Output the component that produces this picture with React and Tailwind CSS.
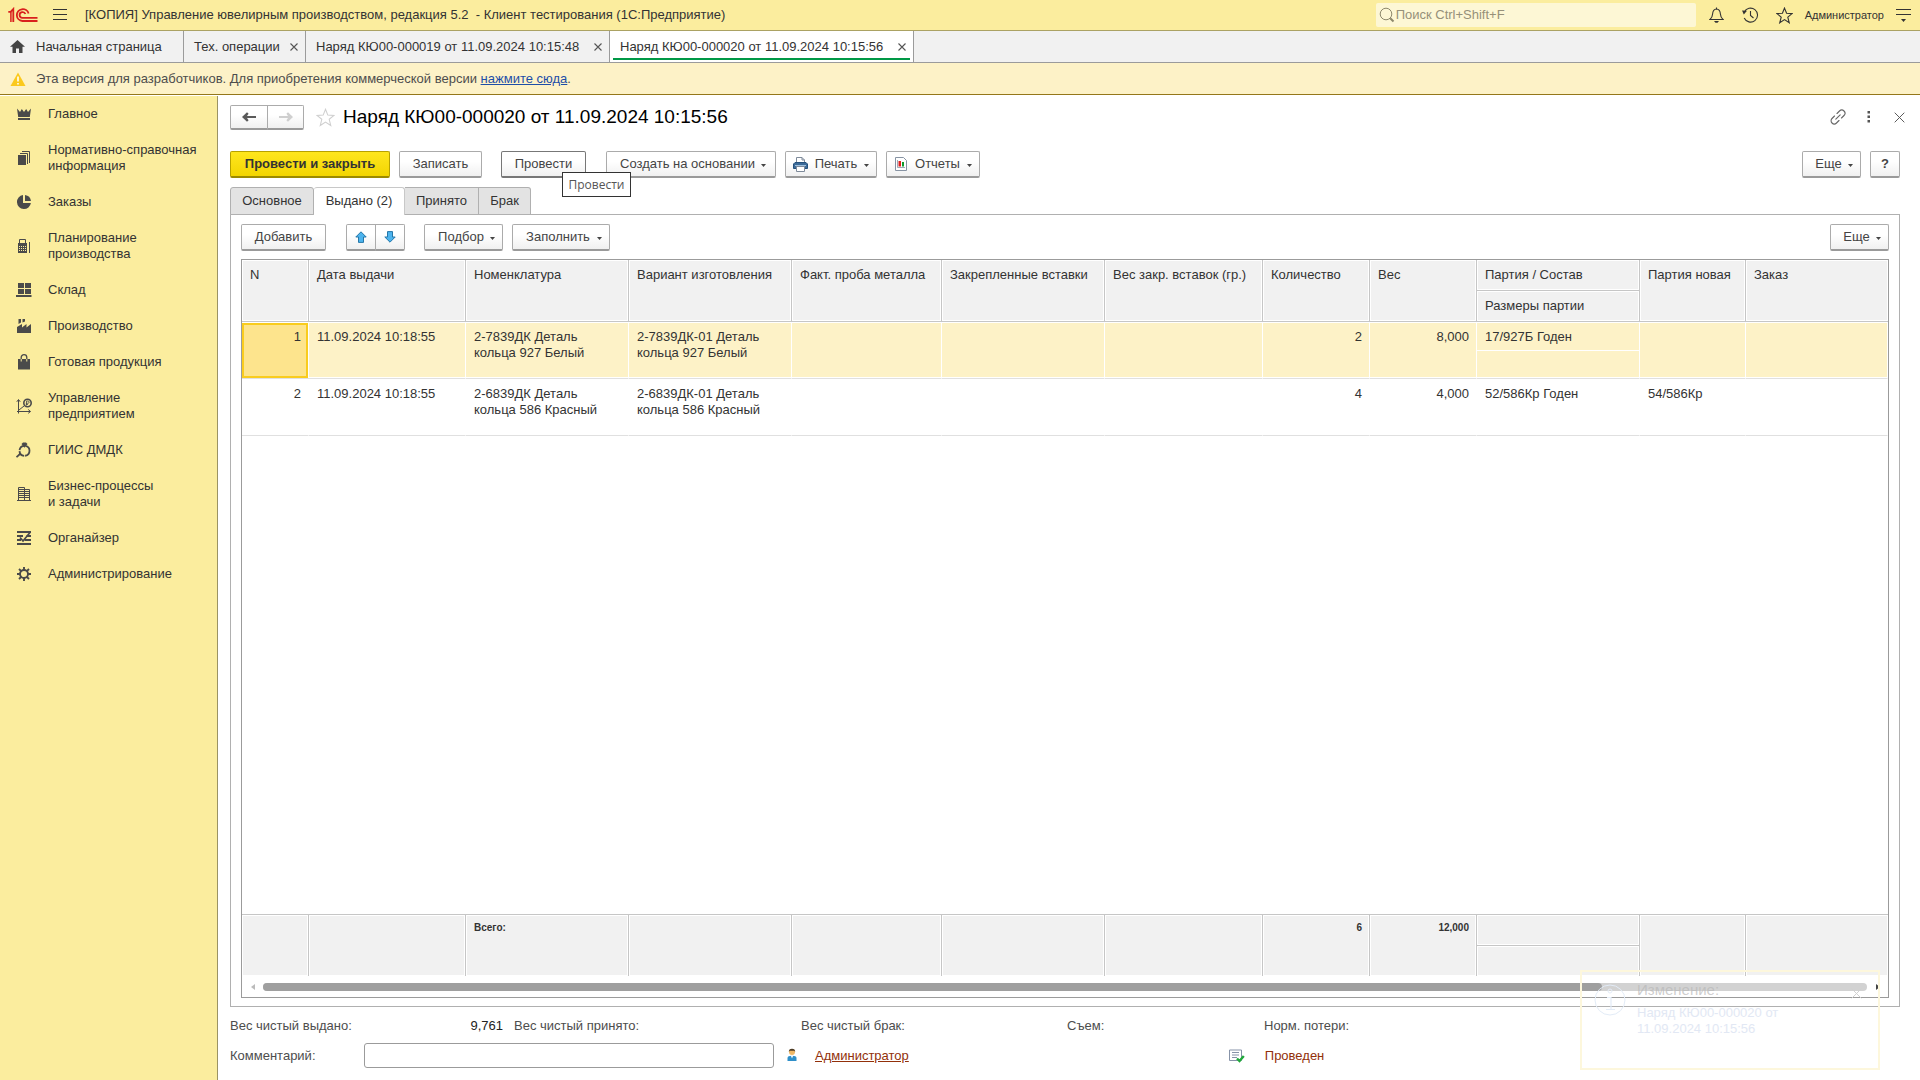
import React from "react";

const FONT = "font-['Liberation_Sans',Arial,sans-serif]";

/* ---------- icons ---------- */

const Svg = ({ w = 16, h = 16, children, className = "" }) => (
  <svg width={w} height={h} viewBox={`0 0 ${w} ${h}`} className={`shrink-0 ${className}`} fill="none" aria-hidden="true">
    {children}
  </svg>
);

const Logo = () => (
  <Svg w={30} h={16}>
    <g stroke="#d9201d" strokeWidth="1.8">
      <path d="M0.3 4.8 H2.6 L5.3 2 V15" />
      <path d="M2.9 5 V15" strokeWidth="1.5" />
      <path d="M20.6 6.5 A6 5.9 0 1 0 14.4 14 H29.5" />
      <path d="M17.4 7 A3 2.9 0 1 0 14.4 10.9 H29.5" />
    </g>
  </Svg>
);

const D = "#4a4a4a";

const sectionIcons = {
  crown: (
    <Svg>
      <path d="M1 2.5 L4 6 L5.8 3 L8 6 L10.2 3 L12 6 L15 2.5 L13.8 11 H2.2 Z" fill={D} />
      <path d="M2 12 H14 V14 H2 Z" fill={D} />
    </Svg>
  ),
  books: (
    <Svg>
      <path d="M2 5 H10 V15 H2 Z" fill={D} />
      <path d="M4 3.5 H11.5 V14 M6 1.5 H13.5 V13" stroke={D} />
    </Svg>
  ),
  pie: (
    <Svg>
      <path d="M7 1.1 A7 7 0 1 0 14.9 9 H7 Z" fill={D} />
      <path d="M9 1 A7 7 0 0 1 15 7 H9 Z" fill={D} />
    </Svg>
  ),
  calc: (
    <Svg>
      <path d="M3.5 6 V1.5 H9.5 V6" stroke={D} />
      <path d="M2 5 H11 V15 H2 Z" fill={D} />
      <path d="M3 8.5 H10 M3 10.5 H10 M3 12.5 H10" stroke="#fbed9e" strokeDasharray="1 1" />
      <path d="M13.5 4 V15" stroke={D} />
    </Svg>
  ),
  store: (
    <Svg>
      <path d="M2 1 H8 V6 H2 Z M9 1 H15 V6 H9 Z M2 7 H8 V12 H2 Z M9 7 H15 V12 H9 Z M0 13 H15.5 V15 H0 Z" fill={D} />
    </Svg>
  ),
  factory: (
    <Svg>
      <path d="M1 15 V9 L6 6 V9.5 L10.5 6 V9.5 L15 6 V15 Z" fill={D} />
      <path d="M2.5 1 H5 V4.5 L2.5 6 Z M6.5 1 H9 V3.5 L6.5 4.5 Z" fill={D} />
    </Svg>
  ),
  bag: (
    <Svg>
      <path d="M2 5 H14 V15.5 H2 Z" fill={D} />
      <path d="M5.2 5 V3.5 A2.8 2.8 0 0 1 10.8 3.5 V5" stroke={D} strokeWidth="1.3" />
      <path d="M5.2 5 V7.5 M10.8 5 V7.5" stroke="#fbed9e" strokeWidth="1" />
    </Svg>
  ),
  growth: (
    <Svg w={17}>
      <path d="M2.5 15.5 V2 M0.8 3.8 L2.5 1.5 L4.2 3.8 M1 13.5 H14 M12.2 11.5 L14.6 13.5 L12.2 15.3 M3 12 L8 8" stroke={D} />
      <circle cx="11.5" cy="5" r="3.7" stroke={D} strokeWidth="1.6" />
      <path d="M10.5 7.5 V3 H12 A1 1 0 0 1 12 5.3 H9.8 M9.8 6.5 H12" stroke={D} strokeWidth="0.8" />
    </Svg>
  ),
  ring: (
    <Svg>
      <circle cx="8.5" cy="8.8" r="5" stroke={D} strokeWidth="1.8" strokeDasharray="7 1" />
      <path d="M5.5 2 L7 0.5 H10 L11.5 2 L8.5 5.8 Z" fill={D} />
      <path d="M0.5 15.2 L4.5 11.5" stroke={D} strokeWidth="1.8" />
    </Svg>
  ),
  building: (
    <Svg>
      <path d="M2.5 14 V1.5 H8.5 V14 M8.5 3.5 H13.5 V14 M1 14.5 H15" stroke={D} />
      <path d="M3 3.5 H8 M3 5.5 H8 M3 7.5 H8 M3 9.5 H8 M3 11.5 H8 M9 5.5 H13 M9 7.5 H13 M9 9.5 H13 M9 11.5 H13" stroke={D} />
    </Svg>
  ),
  organizer: (
    <Svg>
      <path d="M1 2 H15 M1 6 H7 M10.5 6 H15 M1 10 H5 M8.5 10 H15 M1 14 H15" stroke={D} strokeWidth="1.8" />
      <path d="M4 7.5 L7 11 L14 2.5" stroke={D} strokeWidth="1.7" />
    </Svg>
  ),
  gear: (
    <Svg>
      <circle cx="8" cy="8" r="4" stroke={D} strokeWidth="1.9" />
      <path d="M8 1 V4 M8 12 V15 M1 8 H4 M12 8 H15 M3 3 L5.2 5.2 M10.8 10.8 L13 13 M13 3 L10.8 5.2 M5.2 10.8 L3 13" stroke={D} strokeWidth="1.9" />
    </Svg>
  ),
};

const Caret = () => (
  <Svg w={5} h={3} className="mt-[3px]">
    <path d="M0 0 H5 L2.5 3 Z" fill="#444" />
  </Svg>
);

const CloseX = ({ color = "#555", size = 8 }) => (
  <svg width={size} height={size} viewBox="0 0 8 8" fill="none" aria-hidden="true" className="shrink-0">
    <path d="M0.5 0.5 L7.5 7.5 M7.5 0.5 L0.5 7.5" stroke={color} strokeWidth={size > 10 ? 0.7 : 1.1} />
  </svg>
);

const Star = ({ color, size, width = 1.2 }) => (
  <svg width={size} height={size} viewBox="0 0 18 18" fill="none" aria-hidden="true">
    <path d="M9 1.2 L11.2 6.7 L17 7 L12.5 10.7 L14 16.6 L9 13.3 L4 16.6 L5.5 10.7 L1 7 L6.8 6.7 Z" stroke={color} strokeWidth={width} />
  </svg>
);

const NavArrow = ({ color, flip }) => (
  <Svg w={14} h={10} className={flip ? "rotate-180" : ""}>
    <path d="M0 5 L5 0.2 L6.6 1.8 L5 3.9 H14 V6.1 H5 L6.6 8.2 L5 9.8 Z" fill={color} />
  </Svg>
);

const MoveArrow = ({ flip }) => (
  <Svg w={12} h={12} className={flip ? "rotate-180" : ""}>
    <path d="M6 0.8 L11.2 6 H8.5 V11.4 H3.5 V6 H0.8 Z" fill="#4db4ee" stroke="#2577a8" />
  </Svg>
);

const Printer = () => (
  <Svg w={15} h={15}>
    <path d="M3.5 5 V0.5 H9 L11.5 3 V5" fill="#fff" stroke="#7e8a9a" />
    <path d="M9 0.5 V3 H11.5" stroke="#7e8a9a" />
    <path d="M0.5 7 L2 5.5 H13 L14.5 7 V11.5 H0.5 Z" fill="#3b6a98" stroke="#25517c" />
    <path d="M2 8.5 H13" stroke="#9fc0dd" />
    <path d="M3.5 9.5 H11.5 V14.5 H3.5 Z" fill="#fff" stroke="#7e8a9a" />
  </Svg>
);

const Report = () => (
  <Svg w={12} h={14}>
    <path d="M0.5 0.5 H8.5 L11.5 3.5 V13.5 H0.5 Z" fill="#fff" stroke="#8793a3" />
    <path d="M2.5 3 V10.5 H10" stroke="#8793a3" strokeWidth="0.8" />
    <path d="M3.5 4 H6 V9.5 H3.5 Z" fill="#e01f1f" />
    <path d="M7 5 H9 V9.5 H7 Z" fill="#119a2b" />
  </Svg>
);

/* ---------- controls ---------- */

const PLAIN = "border-[#ababab] border-b-[#9a9a9a] bg-linear-to-b from-white from-40% to-[#f0f0f0] text-[#444]";
const HOVERED = "border-[#777] border-b-[#777] bg-linear-to-b from-white from-40% to-[#f0f0f0] text-[#444]";
const PRIMARY = "border-[#b7a100] border-b-[#9c8a00] bg-linear-to-b from-[#ffe61c] to-[#f3d500] font-bold text-[#333]";

const Btn = ({ className = "", tone = PLAIN, size = "h-[27px]", children, ...rest }) => (
  <button
    type="button"
    className={`flex items-center justify-center whitespace-nowrap rounded-[2px] border border-b-2 text-[13px] leading-4 ${size} ${tone} ${className}`}
    {...rest}
  >
    {children}
  </button>
);

const sections = [
  ["crown", "Главное"],
  ["books", "Нормативно-справочная информация"],
  ["pie", "Заказы"],
  ["calc", "Планирование производства"],
  ["store", "Склад"],
  ["factory", "Производство"],
  ["bag", "Готовая продукция"],
  ["growth", "Управление предприятием"],
  ["ring", "ГИИС ДМДК"],
  ["building", "Бизнес-процессы и\u00a0задачи"],
  ["organizer", "Органайзер"],
  ["gear", "Администрирование"],
];

const windowTabs = [
  { title: "Тех. операции", w: "w-[122px]" },
  { title: "Наряд КЮ00-000019 от 11.09.2024 10:15:48", w: "w-[304px]" },
  { title: "Наряд КЮ00-000020 от 11.09.2024 10:15:56", w: "w-[304px]", active: true },
];

const columns = [
  { title: "N", w: "w-[67px]", right: true },
  { title: "Дата выдачи", w: "w-[157px]" },
  { title: "Номенклатура", w: "w-[163px]" },
  { title: "Вариант изготовления", w: "w-[163px]" },
  { title: "Факт. проба металла", w: "w-[150px]" },
  { title: "Закрепленные вставки", w: "w-[163px]" },
  { title: "Вес закр. вставок (гр.)", w: "w-[158px]" },
  { title: "Количество", w: "w-[107px]", right: true },
  { title: "Вес", w: "w-[107px]", right: true },
  { title: "Партия / Состав", w: "w-[163px]", split: true },
  { title: "Партия новая", w: "w-[106px]" },
  { title: "Заказ", w: "" },
];

const rows = [
  ["1", "11.09.2024 10:18:55", "2-7839ДК Деталь кольца 927 Белый", "2-7839ДК-01 Деталь кольца 927 Белый", "", "", "", "2", "8,000", "17/927Б Годен", "", ""],
  ["2", "11.09.2024 10:18:55", "2-6839ДК Деталь кольца 586 Красный", "2-6839ДК-01 Деталь кольца 586 Красный", "", "", "", "4", "4,000", "52/586Кр Годен", "54/586Кр", ""],
];

const totals = { 2: "Всего:", 7: "6", 8: "12,000" };

const HEAD =
  "border-b border-r border-[#c6c6c6] bg-[#f1f1f1] px-2 text-left align-top font-normal leading-4 whitespace-nowrap overflow-hidden shadow-[inset_0_0_0_1px_#fff]";

function TitleBar() {
  return (
    <header className="flex h-[31px] shrink-0 items-center border-b border-[#aba263] bg-[#fbed9e] pl-2 pr-[9px] text-[#333]">
      <Logo />
      <button type="button" aria-label="Меню" className="ml-[15px]">
        <Svg w={14} h={12}>
          <path d="M0 0.5 H14 M0 5.5 H14 M0 10.5 H14" stroke="#333" />
        </Svg>
      </button>
      <h1 className="ml-[18px] whitespace-pre text-[13px] leading-4">
        {"[КОПИЯ] Управление ювелирным производством, редакция 5.2  - Клиент тестирования (1С:Предприятие)"}
      </h1>
      <label className="ml-auto flex h-6 w-80 items-center rounded-[2px] bg-[#fdf7d5] pl-[3px]">
        <Svg w={16} h={16}>
          <circle cx="7" cy="7" r="5.8" stroke="#8d886c" />
          <path d="M11.2 11.2 L14.5 14.5" stroke="#8d886c" strokeWidth="2" />
        </Svg>
        <input
          type="text"
          aria-label="Поиск"
          placeholder="Поиск Ctrl+Shift+F"
          className="h-5 w-full bg-transparent pb-[2px] pl-px text-[13px] leading-4 outline-none placeholder:text-[#969079]"
        />
      </label>
      <button type="button" aria-label="Уведомления" className="ml-[13px]">
        <Svg w={15} h={16}>
          <path d="M1 12.5 C3 11 3.4 9.5 3.6 7 C3.8 4 5 2.2 7.5 2 C10 2.2 11.2 4 11.4 7 C11.6 9.5 12 11 14 12.5 Z M7.5 2 V0.5" stroke="#333" strokeWidth="1.1" />
          <path d="M5 14 H10 L8.5 15.8 H6.5 Z" fill="#333" />
        </Svg>
      </button>
      <button type="button" aria-label="История" className="ml-[18px]">
        <Svg w={17} h={16}>
          <path d="M2.2 5.2 A7 7 0 1 1 2.2 11" stroke="#333" strokeWidth="1.1" />
          <path d="M0 3.5 L5 3.8 L1.8 7.5 Z" fill="#333" />
          <path d="M8.5 4 V8.5 L11.5 11" stroke="#333" strokeWidth="1.1" />
        </Svg>
      </button>
      <button type="button" aria-label="Избранное" className="ml-[17px]">
        <Star color="#333" size={17} />
      </button>
      <button type="button" className="ml-3 text-[11px] leading-4">Администратор</button>
      <button type="button" aria-label="Настройки" className="ml-3">
        <Svg w={15} h={14}>
          <path d="M0 1.5 H15 M0 6.5 H15" stroke="#333" strokeWidth="1.2" />
          <path d="M5 11 H10 L7.5 14 Z" fill="#333" />
        </Svg>
      </button>
    </header>
  );
}

function WindowTabs() {
  return (
    <nav className="flex h-8 shrink-0 border-b border-[#9b9b9b] bg-[#f1f1f1] text-[13px] leading-4 text-[#333]">
      <button type="button" className="flex w-[184px] items-center border-r border-[#9b9b9b] pl-[10px]">
        <Svg w={15} h={13}>
          <path d="M7.5 0 L15 6.8 H12.5 V13 H9 V8.5 H6 V13 H2.5 V6.8 H0 Z" fill="#444" />
        </Svg>
        <span className="ml-[11px]">Начальная страница</span>
      </button>
      {windowTabs.map((t) => (
        <div
          key={t.title}
          className={`relative flex items-center justify-between border-r border-[#9b9b9b] pl-[10px] pr-[7px] ${t.w} ${t.active ? "bg-white" : ""}`}
        >
          <button type="button" className="whitespace-nowrap">{t.title}</button>
          <button type="button" aria-label="Закрыть"><CloseX /></button>
          {t.active && <span className="absolute inset-x-[3px] bottom-[2px] h-[2px] bg-[#009846]" />}
        </div>
      ))}
    </nav>
  );
}

function Notice() {
  return (
    <div className="flex h-8 shrink-0 items-center border-b border-[#94771a] bg-[#fdf2c7] pl-[10px] text-[13px] leading-4 text-[#4d4d4d]">
      <Svg w={16} h={14}>
        <path d="M8 0.5 L15.5 14 H0.5 Z" fill="#fbc91d" />
        <path d="M8 4.5 V9.5 M8 11 V12.5" stroke="#fff" strokeWidth="1.6" />
      </Svg>
      <p className="ml-[10px]">
        Эта версия для разработчиков. Для приобретения коммерческой версии{" "}
        <a href="#buy" className="text-[#1d4ea8] underline">нажмите сюда</a>.
      </p>
    </div>
  );
}

function Sidebar() {
  return (
    <aside className="w-[218px] shrink-0 border-r border-[#9b9363] bg-[#fbed9e]">
      {sections.map(([icon, title]) => (
        <a key={icon} href={`#${icon}`} className="flex items-center py-[10px] pl-4 pr-4 text-[13px] leading-4 text-[#333]">
          <span className="flex w-8 shrink-0">{sectionIcons[icon]}</span>
          <span>{title}</span>
        </a>
      ))}
    </aside>
  );
}

function FormHeader() {
  return (
    <div className="flex h-6 items-center">
      <div className="flex h-[25px]">
        <Btn aria-label="Назад" size="h-[25px]" className="w-[38px] rounded-r-none"><NavArrow color="#5a5a5a" /></Btn>
        <Btn aria-label="Вперед" size="h-[25px]" className="-ml-px w-[37px] rounded-l-none"><NavArrow color="#cfcfcf" flip /></Btn>
      </div>
      <button type="button" aria-label="В избранное" className="ml-3"><Star color="#cfcfcf" size={19} width={1} /></button>
      <h2 className="ml-2 pb-px text-[19px] leading-6 text-black">Наряд КЮ00-000020 от 11.09.2024 10:15:56</h2>
      <div className="ml-auto flex items-center">
        <button type="button" aria-label="Ссылка">
          <Svg w={16} h={16}>
            <g stroke="#666" strokeWidth="1.1" strokeLinecap="round">
              <path d="M7 4.5 L9.5 2 A3 3 0 0 1 14 6.5 L11.5 9" />
              <path d="M9 11.5 L6.5 14 A3 3 0 0 1 2 9.5 L4.5 7" />
              <path d="M5.8 10.2 L10.2 5.8" />
            </g>
          </Svg>
        </button>
        <button type="button" aria-label="Меню формы" className="ml-[21px]">
          <Svg w={4} h={12}>
            <path d="M0.5 0 H3 V2.5 H0.5 Z M0.5 4.5 H3 V7 H0.5 Z M0.5 9 H3 V11.5 H0.5 Z" fill="#555" />
          </Svg>
        </button>
        <button type="button" aria-label="Закрыть форму" className="ml-[23px] mr-[-5px]"><CloseX size={11} /></button>
      </div>
    </div>
  );
}

function CommandBar() {
  return (
    <div className="mt-[22px] flex">
      <Btn tone={PRIMARY} className="w-40">Провести и закрыть</Btn>
      <Btn className="ml-[9px] w-[83px]">Записать</Btn>
      <div className="relative ml-[19px]">
        <Btn tone={HOVERED} className="w-[85px]" aria-describedby="post-tip">Провести</Btn>
        <div
          id="post-tip"
          role="tooltip"
          className="absolute left-[61px] top-[21px] z-10 flex h-[25px] w-[69px] items-center justify-center border border-[#333] bg-white font-['Open_Sans','Noto_Sans',sans-serif] text-[12px] leading-4 text-[#555]"
        >
          Провести
        </div>
      </div>
      <Btn className="ml-5 w-[170px] gap-[6px] pl-1">Создать на основании<Caret /></Btn>
      <Btn className="ml-[9px] w-[92px]"><Printer /><span className="ml-[7px] mr-[7px]">Печать</span><Caret /></Btn>
      <Btn className="ml-[9px] w-[94px] pl-px"><Report /><span className="ml-2 mr-[7px]">Отчеты</span><Caret /></Btn>
      <Btn className="ml-auto w-[59px] gap-[6px] pl-[5px]">Еще<Caret /></Btn>
      <Btn className="ml-[9px] w-[30px] font-bold" aria-label="Справка">?</Btn>
    </div>
  );
}

function PageTabs() {
  const idle = "border-[#b0b0b0] bg-[#e3e3e3]";
  return (
    <div role="tablist" className="relative z-[1] -mb-px mt-[9px] flex h-7 text-[13px] leading-4 text-[#333]">
      <button type="button" role="tab" className={`w-[84px] rounded-t-[3px] border pb-px ${idle}`}>Основное</button>
      <button type="button" role="tab" aria-selected="true" className="w-[91px] rounded-t-[3px] border border-b-0 border-l-0 border-[#c8c8c8] bg-white pb-[2px]">Выдано (2)</button>
      <button type="button" role="tab" className={`w-[74px] border border-l-0 pb-px ${idle}`}>Принято</button>
      <button type="button" role="tab" className={`w-[52px] rounded-tr-[3px] border border-l-0 pb-px ${idle}`}>Брак</button>
    </div>
  );
}

function Cell({ col, value, selected, first }) {
  const base = "overflow-hidden align-top leading-4 border-b border-b-[#e0e0e0]";
  if (selected && first) {
    return (
      <td className={`${base} p-0 pt-px pr-px`}>
        <div className="h-[55px] border-2 border-[#f9cc1e] bg-[#fde48d] pr-[5px] pt-1 text-right">{value}</div>
      </td>
    );
  }
  const tone = selected ? "bg-[#fdf2c7] border-r border-r-white shadow-[inset_0_1px_0_#fff,inset_0_-1px_0_#fff]" : "border-r border-r-transparent";
  if (selected && col.split) {
    return (
      <td className={`${base} ${tone} p-0`}>
        <div className="h-[29px] whitespace-nowrap border-b border-white pl-2 pt-[7px]">{value}</div>
      </td>
    );
  }
  return <td className={`${base} ${tone} pl-2 pr-[7px] pt-[7px] ${col.right ? "text-right" : ""}`}>{value}</td>;
}

function ItemsTable() {
  return (
    <div className="mt-2 flex min-h-0 flex-1 flex-col border border-[#9b9b9b] bg-white">
      <div className="min-h-0 flex-1 overflow-hidden">
        <table className="h-full w-full table-fixed border-separate border-spacing-0 text-[13px] text-[#333]">
          <colgroup>
            {columns.map((c) => <col key={c.title} className={c.w} />)}
          </colgroup>
          <thead>
            <tr className="h-[31px]">
              {columns.map((c) => (
                <th key={c.title} scope="col" rowSpan={c.split ? 1 : 2} className={`pt-[7px] last:border-r-0 ${HEAD}`}>{c.title}</th>
              ))}
            </tr>
            <tr className="h-[31px]">
              <th scope="col" className={`pt-[7px] ${HEAD}`}>Размеры партии</th>
            </tr>
          </thead>
          <tbody>
            {rows.map((r, i) => (
              <tr key={r[0]} className="h-[57px]">
                {r.map((v, j) => <Cell key={j} col={columns[j]} value={v} selected={i === 0} first={j === 0} />)}
              </tr>
            ))}
            <tr><td colSpan={12} /></tr>
          </tbody>
          <tfoot>
            <tr className="h-[62px]">
              {columns.map((c, i) => (
                <td
                  key={c.title}
                  className={`overflow-hidden border-r border-t border-[#c6c6c6] bg-[#f1f1f1] align-top text-[10px] font-bold leading-4 shadow-[inset_0_0_0_1px_#fff] last:border-r-0 ${c.split ? "p-0" : "pl-2 pr-[7px] pt-[5px]"} ${c.right ? "text-right" : ""}`}
                >
                  {c.split ? <div className="h-[31px] border-b border-[#c6c6c6] shadow-[0_1px_0_#fff,inset_0_-1px_0_#fff]" /> : totals[i]}
                </td>
              ))}
            </tr>
          </tfoot>
        </table>
      </div>
      <div className="flex h-[21px] shrink-0 items-center pl-[9px] pr-2">
        <Svg w={4} h={6}><path d="M4 0 V6 L0 3 Z" fill="#bbb" /></Svg>
        <div className="ml-2 mr-[9px] h-2 flex-1 rounded-full bg-[#d2d2d2]">
          <div className="h-2 w-[83.5%] rounded-full bg-[#9f9f9f]" />
        </div>
        <Svg w={4} h={6}><path d="M0 0 V6 L4 3 Z" fill="#444" /></Svg>
      </div>
    </div>
  );
}

function IssuedPanel() {
  return (
    <section className="flex min-h-0 flex-1 flex-col border border-[#b0b0b0] px-[10px] pb-2 pt-[9px]">
      <div className="flex">
        <Btn className="w-[85px]">Добавить</Btn>
        <Btn className="ml-5 w-[30px] rounded-r-none" aria-label="Вверх"><MoveArrow /></Btn>
        <Btn className="-ml-px w-[30px] rounded-l-none" aria-label="Вниз"><MoveArrow flip /></Btn>
        <Btn className="ml-[19px] w-[79px] gap-[6px] pl-[6px]">Подбор<Caret /></Btn>
        <Btn className="ml-[9px] w-[98px] gap-[7px] pl-[6px]">Заполнить<Caret /></Btn>
        <Btn className="ml-auto w-[59px] gap-[6px] pl-[5px]">Еще<Caret /></Btn>
      </div>
      <ItemsTable />
    </section>
  );
}

function FormFooter() {
  return (
    <div className="text-[13px] leading-4 text-[#4d4d4d]">
      <div className="mt-[11px] grid grid-cols-[273px_276px_255px_186px_1fr] gap-x-[11px] whitespace-nowrap">
        <div className="flex justify-between"><span>Вес чистый выдано:</span><span className="text-[#222]">9,761</span></div>
        <span>Вес чистый принято:</span>
        <span>Вес чистый брак:</span>
        <span>Съем:</span>
        <span>Норм. потери:</span>
      </div>
      <div className="mb-3 mt-[9px] flex items-center">
        <label htmlFor="comment" className="w-[134px]">Комментарий:</label>
        <input id="comment" type="text" className="h-[25px] w-[410px] rounded-[3px] border border-[#9b9b9b] bg-white px-2" />
        <Svg w={10} h={14} className="ml-[13px] mb-px">
          <path d="M0.5 13 V10 C0.5 8.5 2 7.8 5 7.8 C8 7.8 9.5 8.5 9.5 10 V13 Z" fill="#2f8fc9" />
          <circle cx="5" cy="4" r="3" fill="#f0b867" />
          <path d="M1.8 4 A3.2 3.2 0 0 1 8.2 4 L7.3 2.8 H2.7 Z" fill="#4b3a25" />
          <path d="M3.8 7.5 H6.2 L5 10.5 Z" fill="#fff" />
        </Svg>
        <a href="#author" className="ml-[18px] text-[#92300a] underline">Администратор</a>
        <div className="ml-80 flex items-center gap-5 text-[#92300a]">
          <Svg w={16} h={14}>
            <path d="M0.5 1 H12.5 V11.5 H0.5 Z" fill="#fff" stroke="#8793a8" />
            <path d="M3 3.5 H10 M3 6 H10 M3 8.5 H8" stroke="#8793a8" />
            <path d="M8 9.5 L10.5 12 L14.8 7" stroke="#1fa83a" strokeWidth="2.4" />
          </Svg>
          <span>Проведен</span>
        </div>
      </div>
    </div>
  );
}

function Toast() {
  return (
    <div role="status" className="absolute bottom-[10px] right-10 flex h-[100px] w-[300px] border-2 border-[#fdf7dc] text-[13px] leading-4">
      <Svg w={32} h={32} className="ml-3 mt-3">
        <circle cx="16" cy="16" r="15" stroke="#e3ecf7" />
        <path d="M13 13.5 H17 V25.5 M12 25.5 H21" stroke="#e3ecf7" strokeWidth="1.2" />
        <circle cx="16" cy="7" r="2" stroke="#e3ecf7" />
      </Svg>
      <div className="ml-[11px] mt-2 w-[150px]">
        <p className="text-[15px] leading-5 text-[#b8b8b8]/70">Изменение:</p>
        <a href="#order" className="mt-[5px] block text-[#e2e8f4]">Наряд КЮ00-000020 от 11.09.2024 10:15:56</a>
      </div>
      <button type="button" aria-label="Закрыть уведомление" className="ml-auto mr-4 mt-[15px] h-3"><CloseX size={11} color="#cfcfcf" /></button>
    </div>
  );
}

export default function App() {
  return (
    <div className={`relative flex h-screen flex-col overflow-hidden bg-white ${FONT}`}>
      <TitleBar />
      <WindowTabs />
      <Notice />
      <div className="flex min-h-0 flex-1 pt-px">
        <Sidebar />
        <main className="flex min-w-0 flex-1 flex-col pl-3 pr-5 pt-[9px]">
          <FormHeader />
          <CommandBar />
          <PageTabs />
          <IssuedPanel />
          <FormFooter />
        </main>
      </div>
      <Toast />
    </div>
  );
}
